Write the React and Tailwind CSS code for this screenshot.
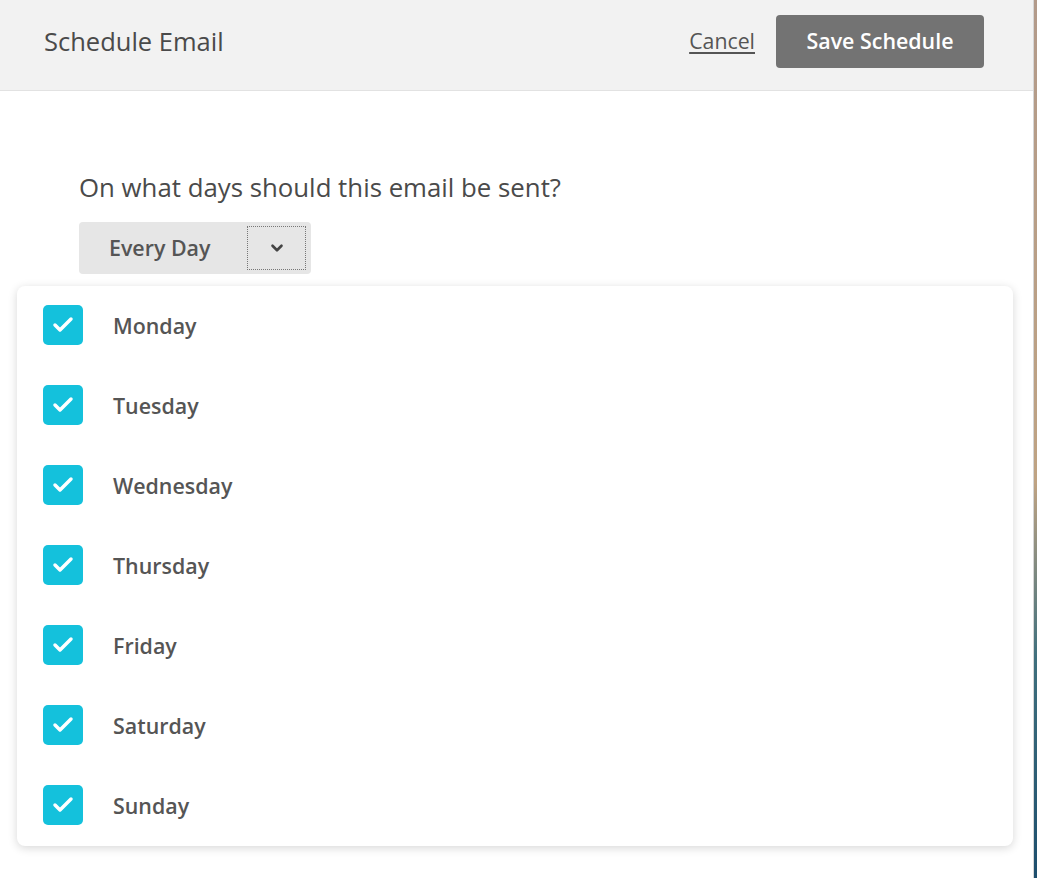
import { Check, ChevronDown } from 'lucide-react'

const DAYS = ['Monday', 'Tuesday', 'Wednesday', 'Thursday', 'Friday', 'Saturday', 'Sunday']

export default function App() {
  return (
    <div className="flex h-[878px] w-[1037px] overflow-hidden bg-white font-['Open_Sans',sans-serif] text-[#4a4a4a]">
      <div className="flex w-[1034px] flex-col border-r border-[#d6d6d6]">
        {/* Header */}
        <div className="flex h-[91px] shrink-0 items-center justify-between border-b border-[#e2e2e2] bg-[#f2f2f2] pb-[8px] pl-[44px] pr-[49px]">
          <h1 className="text-[25.5px] font-normal text-[#4a4a4a]">Schedule Email</h1>
          <div className="flex items-center gap-[21px]">
            <button className="text-[21.3px] text-[#555] underline underline-offset-[3px]">Cancel</button>
            <button className="h-[53px] w-[208px] rounded-[4px] bg-[#737373] text-[21.4px] font-semibold text-white">
              Save Schedule
            </button>
          </div>
        </div>

        {/* Body */}
        <div className="relative flex-1">
          <div className="pl-[79px] pt-[80px]">
            <p className="text-[25.8px] font-normal leading-[32px] text-[#4a4a4a]">On what days should this email be sent?</p>
            <div className="mt-[19px] flex h-[52px] w-[232px] items-center rounded-[4px] bg-[#e6e6e6] pl-[30px] pr-[5px]">
              <span className="flex-1 text-[21.4px] font-semibold text-[#555]">Every Day</span>
              <span className="flex h-[44px] w-[59px] items-center justify-center border border-dotted border-[#777]">
                <ChevronDown size={18} strokeWidth={3.5} className="text-[#444]" />
              </span>
            </div>
          </div>

          {/* Days menu */}
          <div className="absolute left-[17px] top-[195px] w-[996px] rounded-[8px] bg-white pb-[21px] pl-[26px] pt-[19px] shadow-[0_2px_10px_rgba(0,0,0,0.16)]">
            <div className="flex flex-col gap-[40px]">
              {DAYS.map(day => (
                <label key={day} className="flex h-[40px] items-center">
                  <span className="flex h-[40px] w-[40px] items-center justify-center rounded-[5px] bg-[#14c1dc]">
                    <Check size={24} strokeWidth={3.5} className="text-white" />
                  </span>
                  <span className="ml-[30px] pt-[3px] text-[21.4px] font-semibold text-[#555]">{day}</span>
                </label>
              ))}
            </div>
          </div>
        </div>
      </div>
      <div className="w-[3px] bg-[linear-gradient(to_bottom,#b29a8a_0%,#bfa383_55%,#3f6f7d_75%,#1d4e6d_100%)]" />
    </div>
  )
}
